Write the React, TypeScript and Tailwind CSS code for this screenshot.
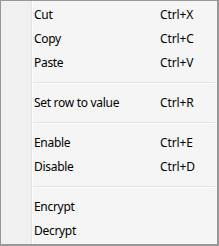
import React from "react";

type Item = { label: string; shortcut?: string } | "sep";

const items: Item[] = [
  { label: "Cut", shortcut: "Ctrl+X" },
  { label: "Copy", shortcut: "Ctrl+C" },
  { label: "Paste", shortcut: "Ctrl+V" },
  "sep",
  { label: "Set row to value", shortcut: "Ctrl+R" },
  "sep",
  { label: "Enable", shortcut: "Ctrl+E" },
  { label: "Disable", shortcut: "Ctrl+D" },
  "sep",
  { label: "Encrypt" },
  { label: "Decrypt" },
];

export default function App() {
  return (
    <div className="w-[219px] h-[246px] bg-white">
      <div
        className="w-[219px] h-[246px] flex border-l border-t border-r-2 border-b-2 border-[#979797] bg-[#f5f5f5] text-[12px] text-black"
        style={{ fontFamily: '"Noto Sans", "Open Sans", sans-serif' }}
      >
        <div className="w-[30px] shrink-0 bg-[#f0f0f0]" />
        <div className="w-px shrink-0 bg-[#e2e3e3]" />
        <div className="w-px shrink-0 bg-white" />
        <div className="flex-1 flex flex-col pt-[2px]">
          {items.map((it, i) =>
            it === "sep" ? (
              <div key={i} className="h-[16px] flex flex-col pt-[7px] pr-[2px]">
                <div className="h-px bg-[#e2e3e3]" />
                <div className="h-px bg-white" />
              </div>
            ) : (
              <div key={i} className="h-[24px] flex items-center pl-[1px] leading-none tracking-[-0.3px]">
                <span className="w-[126px] shrink-0 whitespace-nowrap">{it.label}</span>
                {it.shortcut && <span className="whitespace-nowrap tracking-[-0.1px]">{it.shortcut}</span>}
              </div>
            )
          )}
        </div>
      </div>
    </div>
  );
}
